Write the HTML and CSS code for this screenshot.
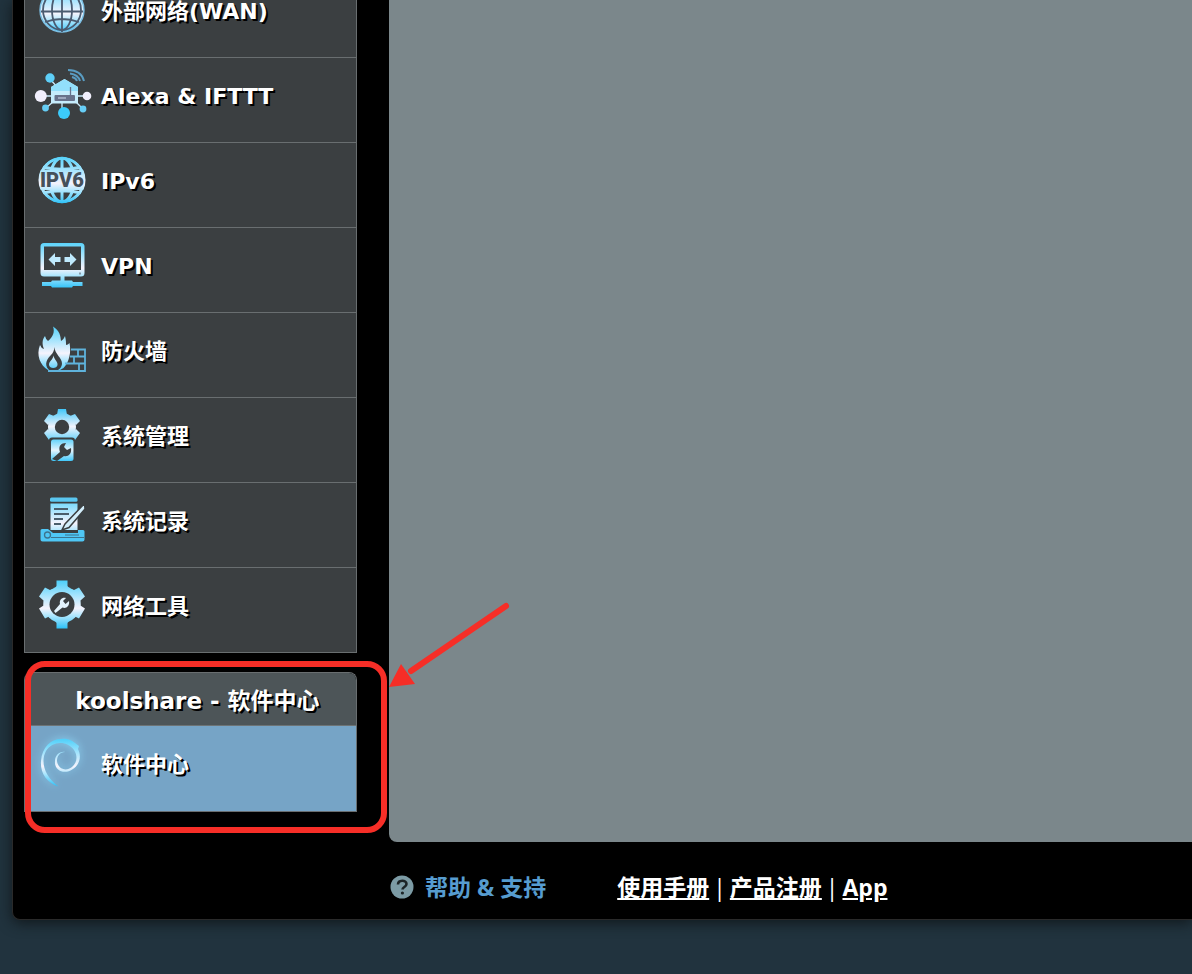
FILE: index.html
```html
<!DOCTYPE html>
<html lang="zh-CN">
<head>
<meta charset="utf-8">
<title>软件中心</title>
<link rel="stylesheet" href="styles.css">
</head>
<body>
<svg class="defs" aria-hidden="true">
  <defs>
    <linearGradient id="ice" gradientUnits="userSpaceOnUse" x1="0" y1="2" x2="0" y2="49">
      <stop offset="0" stop-color="#4fd0fa"/>
      <stop offset=".3" stop-color="#a5e4fd"/>
      <stop offset=".58" stop-color="#f5f3fc"/>
      <stop offset=".75" stop-color="#a8e5fd"/>
      <stop offset="1" stop-color="#31c3f8"/>
    </linearGradient>
    <clipPath id="disc"><circle cx="26" cy="26" r="23.500"/></clipPath>
  </defs>
</svg>
<div class="frame">
  <div class="columns">
    <div class="sidebar">
      <nav class="menu">
        <a class="item" href="#wan">
          <svg class="icon" viewBox="0 0 52 52">
            <circle cx="26" cy="26" r="22" fill="url(#ice)" stroke="#7dbfe4" stroke-width="1.4"/>
            <g fill="none" stroke="#4b5b70" stroke-width="1.8"><ellipse cx="26" cy="26" rx="10" ry="20"/><ellipse cx="26" cy="26" rx="19" ry="20"/><path d="M26 4v44M5 27.500h42M9 15q17-6 34 0M9 38q17-6 34 0"/></g>
          </svg>
          <span class="label">外部网络(WAN)</span>
        </a>
        <a class="item" href="#alexa">
          <svg class="icon" viewBox="0 0 52 52">
            <g stroke="#c9e9f9" stroke-width="1.300" fill="none"><path d="M5 27h42M14 10l8 9M10 39l8-7M47 40l-8-8M26 34v10"/></g>
            <path d="M15 18L28.500 10L42 18V34.500H15z" fill="#c5ecfc"/>
            <path d="M15 18L28.500 10L42 18V22H15z" fill="#92dffb"/>
            <circle cx="14" cy="9" r="4.700" fill="#5ecff8"/><circle cx="4.800" cy="27" r="6" fill="#f1effc"/><circle cx="51" cy="27" r="4.300" fill="#f1effc"/><circle cx="9.500" cy="39" r="3.400" fill="#66cdf5"/><circle cx="47" cy="40" r="3.400" fill="#66cdf5"/><circle cx="28" cy="44" r="6" fill="#3ccbfb"/>
            <rect x="18.500" y="26" width="20.500" height="6" rx="1" fill="#68728b"/><path d="M22 29h8" stroke="#aeb8cc" stroke-width="1.500"/><path d="M34.500 18v9" stroke="#68728b" stroke-width="1.300"/>
            <path d="M32 1q13 0 16 11M34 4.500q8 1 10 7.500M36 8q4 1 5 4" fill="none" stroke="#599cc2" stroke-width="2"/>
          </svg>
          <span class="label">Alexa &amp; IFTTT</span>
        </a>
        <a class="item" href="#ipv6">
          <svg class="icon" viewBox="0 0 52 52">
            <g fill="none" stroke="url(#ice)" stroke-width="3" clip-path="url(#disc)"><circle cx="26" cy="26" r="21.700"/><ellipse cx="26" cy="26" rx="12" ry="22"/><path d="M26.010 3L26 49M7 13q19 4.500 38 0M7 39q19-4.500 38 0" stroke-width="3"/></g>
            <rect x="2" y="15.500" width="48" height="20.500" fill="url(#ice)" clip-path="url(#disc)"/>
            <text class="icon-text" x="26" y="33" text-anchor="middle">IPV6</text>
          </svg>
          <span class="label">IPv6</span>
        </a>
        <a class="item" href="#vpn">
          <svg class="icon" viewBox="0 0 52 52">
            <path fill="url(#ice)" fill-rule="evenodd" d="M8 4h37a3.500 3.500 0 0 1 3.500 3.500V34a3.500 3.500 0 0 1-3.500 3.500H8A3.500 3.500 0 0 1 4.500 34V7.500A3.500 3.500 0 0 1 8 4zM8 7.500V31h37V7.500z"/>
            <path fill="#bfeafd" d="M12.500 20.500l6.500-6.500v4h5.500v5H19v4zM40.500 20.500l-6.500-6.500v4h-5.500v5H34v4z"/>
            <path fill="url(#ice)" d="M24.500 37h4v4.500h-4zM16 41.500h20l1 1.500h9.500v4H37l-1 1.500H16L15 47H6v-4h9z"/><path fill="#879ba9" d="M43 33.500h2v2h-2z"/>
          </svg>
          <span class="label">VPN</span>
        </a>
        <a class="item" href="#firewall">
          <svg class="icon" viewBox="0 0 52 52">
            <path fill="url(#ice)" d="M17 2.500C24 7 24.500 12 25 17c2-1 3-3 4-5 1 4 1 6 1 9q2 0 3.500-2c2 9-.5 20-6 25L24 46H12C4 41 0 31 4 21q1 3 4 4C6 20 6 16 9 12q1 4 3 5C17 13 19 8 17 2.500z"/>
            <path fill="#3b3f41" d="M18.500 23c0 7 8 11 7.500 17-.3 3-2 5-4 6h-9c-6-6-1-12 2-15 2-2 3-4 3.500-8z"/>
            <path fill="url(#ice)" d="M17.500 31.500c1 5 4.500 6 4 9.500-.5 4-8 4-8.500 0-.2-4 4-5 4.500-9.500z"/>
            <path fill="none" stroke="#5fb3dc" stroke-width="1.800" d="M12 47h37V25.500H35M49 32.500H34M49 39.500H29M42 25.500v7M38 32.500v7M43 39.500V47"/>
          </svg>
          <span class="label">防火墙</span>
        </a>
        <a class="item" href="#admin">
          <svg class="icon" viewBox="0 0 52 52">
            <g transform="translate(26 18)"><circle r="14" fill="url(#gearSmall)"/>
              <g fill="url(#gearSmall)"><path d="M-5-12l1-6h8l1 6zM-5 12l1 5h8l1-5zM8-11l5-2 5 7-4 4zM-8-11l-5-2-5 7 4 4zM8 11l5 2 5-7-4-4zM-8 11l-5 2-5-7 4-4z"/></g>
              <circle r="7.200" fill="#3b3f41"/></g>
            <rect x="13" y="28.500" width="26" height="24" rx="3" fill="#3b3f41"/>
            <rect x="15" y="30.500" width="22.500" height="21.500" rx="2.500" fill="url(#boxShade)"/>
            <path d="M16 50l8-7c-2-6 1-9 6-9l-2 4 3 3 4-2c1 6-3 9-7 8l-7 5z" fill="#3b3f41"/>
            <defs><linearGradient id="gearSmall" gradientUnits="userSpaceOnUse" x1="0" y1="-18" x2="0" y2="17"><stop offset="0" stop-color="#40c6f8"/><stop offset=".5" stop-color="#f1f4fd"/><stop offset="1" stop-color="#43cafa"/></linearGradient><linearGradient id="boxShade" x1="0" y1="0" x2="0" y2="1"><stop offset="0" stop-color="#63d2fa"/><stop offset=".5" stop-color="#e6f4fd"/><stop offset="1" stop-color="#40c8fa"/></linearGradient></defs>
          </svg>
          <span class="label">系统管理</span>
        </a>
        <a class="item" href="#log">
          <svg class="icon" viewBox="0 0 52 52">
            <rect x="14" y="3.500" width="27.500" height="4.200" rx="1.500" fill="#5ac6ef"/>
            <path fill="url(#ice)" d="M14.500 9.500h27V36h-27z"/>
            <path stroke="#4a5d6b" stroke-width="1.800" d="M18 15h14M18 20h15M18 25h9M18 30h7"/>
            <path d="M48.500 9.500L29 30l-3 6 7-2.500L49 15z" fill="#d3eefb" stroke="#3b3f41" stroke-width="1.500"/>
            <path fill="#4fc7f5" d="M6 35h6l5 4h25v-3h5q1.500 0 1.500 1.500v8q0 2-2 2H6.500q-2 0-2-2v-9q0-1.500 1.500-1.500z"/><circle cx="11.500" cy="41" r="3" fill="none" stroke="#3d748e" stroke-width="1.300"/><path d="M15 43.500h33M29 41h14" stroke="#3d748e" stroke-width="1.200" fill="none"/>
          </svg>
          <span class="label">系统记录</span>
        </a>
        <a class="item" href="#tools">
          <svg class="icon" viewBox="0 0 52 52">
            <g fill="url(#ice)"><circle cx="26" cy="25.500" r="18.500"/><path d="M19 9l1.500-2V1.500h11V7L33 9l-3 4h-8zM19 42l1.500 2v5.500h11V44l1.500-2-3-4h-8zM35 10l3 1 5-2.500 6 9-4.500 4v5l4.500 3-6 10L38 37l-4 2zM17 10l-3 1-5-2.500-6 9 4.500 4v5L3 29.500l6 10 5-2.500 4 2z"/></g>
            <circle cx="26" cy="25.500" r="12.500" fill="#3b3f41"/>
            <path fill="#e3f3fc" d="M18 32l6-7c-1-4 2-7 6-6l-3 3 2.500 3 3.500-3c1 5-3 8-6.500 6.500L19.500 34z"/>
          </svg>
          <span class="label">网络工具</span>
        </a>
      </nav>
      <nav class="menu-soft">
        <h2 class="menu-title">koolshare - 软件中心</h2>
        <a class="item item-active" href="#soft">
          <svg class="icon glow" viewBox="0 0 52 52">
            <path fill="url(#ice)" d="M22.500 49.500C10 46 4 35 5 24 6 10 15 2 25 2c7-1 11 2 14 4l4 3-1 3c4 8 1 16-5 20-8 6-19 2-18-8 0-6 5-10 10-9-5 0-8 4-8 9 1 8 9 11 15 6 5-4 6-11 2-17C31 3 16 4 10 14 4 25 9 40 22.500 49.500z"/>
          </svg>
          <span class="label">软件中心</span>
        </a>
      </nav>
    </div>
    <main class="panel"></main>
  </div>
  <footer class="footer">
    <a class="help" href="#help">
      <svg class="help-icon" viewBox="0 0 24 24" aria-hidden="true"><circle cx="12" cy="12" r="11.500" fill="#7c9ba5"/><path d="M8 9.500C8 4.500 16.500 4.500 16.500 9c0 3-4 3-4 5.500" fill="none" stroke="#1c2427" stroke-width="2.600"/><circle cx="12.400" cy="18" r="1.600" fill="#1c2427"/></svg>
      <span>帮助 &amp; 支持</span>
    </a>
    <div class="links"><a href="#manual">使用手册</a><span>|</span><a href="#register">产品注册</a><span>|</span><a href="#app">App</a></div>
  </footer>
</div>
<div class="mark-box"></div>
<svg class="mark-arrow" viewBox="0 0 124 88" aria-hidden="true"><path d="M117 5L22 70" stroke="#f62e27" stroke-width="6" stroke-linecap="round"/><path d="M0 86L12 63L26 83z" fill="#f62e27"/></svg>
</body>
</html>
```
FILE: styles.css
```css
* { box-sizing: border-box; }
body {
  margin: 0;
  min-height: 100vh;
  overflow: hidden;
  background: #21333e;
  color: #fff;
  font-family: "DejaVu Sans", "Noto Sans CJK SC", sans-serif;
}
a { color: inherit; }
.defs { position: absolute; width: 0; height: 0; }
.frame {
  margin-left: 12px;
  padding-left: 11px;
  background: #000;
  border: solid #2a2a2a;
  border-width: 0 0 1px 1px;
  border-radius: 0 0 0 8px;
  box-shadow: 0 3px 14px #11181c;
}
.columns { display: flex; gap: 32px; }
.sidebar { width: 333px; flex: none; padding-bottom: 30px; }
.menu { margin-top: -27px; border: solid #696e70; border-width: 0 1px; }
.item {
  display: flex;
  align-items: center;
  gap: 13px;
  padding: 11px 11px 21px;
  background: #3b3f41;
  border-bottom: 1px solid #696e70;
  font-size: 22px;
  line-height: 32px;
  font-weight: bold;
  text-decoration: none;
  text-shadow: 2px 2px 0 #000;
}
.label { padding-top: 3px; }
.icon { width: 52px; height: 52px; flex: none; overflow: visible; }
.icon-text { font: 900 20px Roboto, sans-serif; fill: #46505a; text-shadow: none; }
.menu-soft {
  margin-top: 19px;
  border: solid #696e70;
  border-width: 1px 1px 0;
  border-radius: 8px 8px 0 0;
  overflow: hidden;
}
.menu-title {
  margin: 0;
  padding: 12px 0 8px 14px;
  background: #4d5558;
  border-bottom: 1px solid #6d7375;
  font-size: 23px;
  line-height: 32px;
  text-align: center;
  text-shadow: 2px 2px 0 #000;
}
.item-active { padding-bottom: 22px; background: #76a4c6; }
.glow { filter: drop-shadow(0 0 4px #8fd8f8); }
.panel {
  flex: 1;
  background: #7b878b;
  border-bottom-left-radius: 8px;
}
.footer {
  display: flex;
  align-items: center;
  gap: 71px;
  padding: 29px 0 16px 366px;
  font-family: "Open Sans", "Noto Sans CJK SC", sans-serif;
  font-size: 23px;
  line-height: 32px;
}
.help {
  display: flex;
  align-items: center;
  gap: 11px;
  color: #569ccf;
  font-weight: bold;
  text-decoration: none;
}
.help-icon { width: 24px; height: 24px; }
.links { display: flex; gap: 4px; }
.links a { font-weight: bold; }
.mark-box {
  position: absolute;
  left: 25px;
  top: 661px;
  width: 362px;
  height: 172px;
  border: 6px solid #f62e27;
  border-radius: 20px;
}
.mark-arrow {
  position: absolute;
  left: 389px;
  top: 601px;
  width: 124px;
  height: 88px;
}
```
